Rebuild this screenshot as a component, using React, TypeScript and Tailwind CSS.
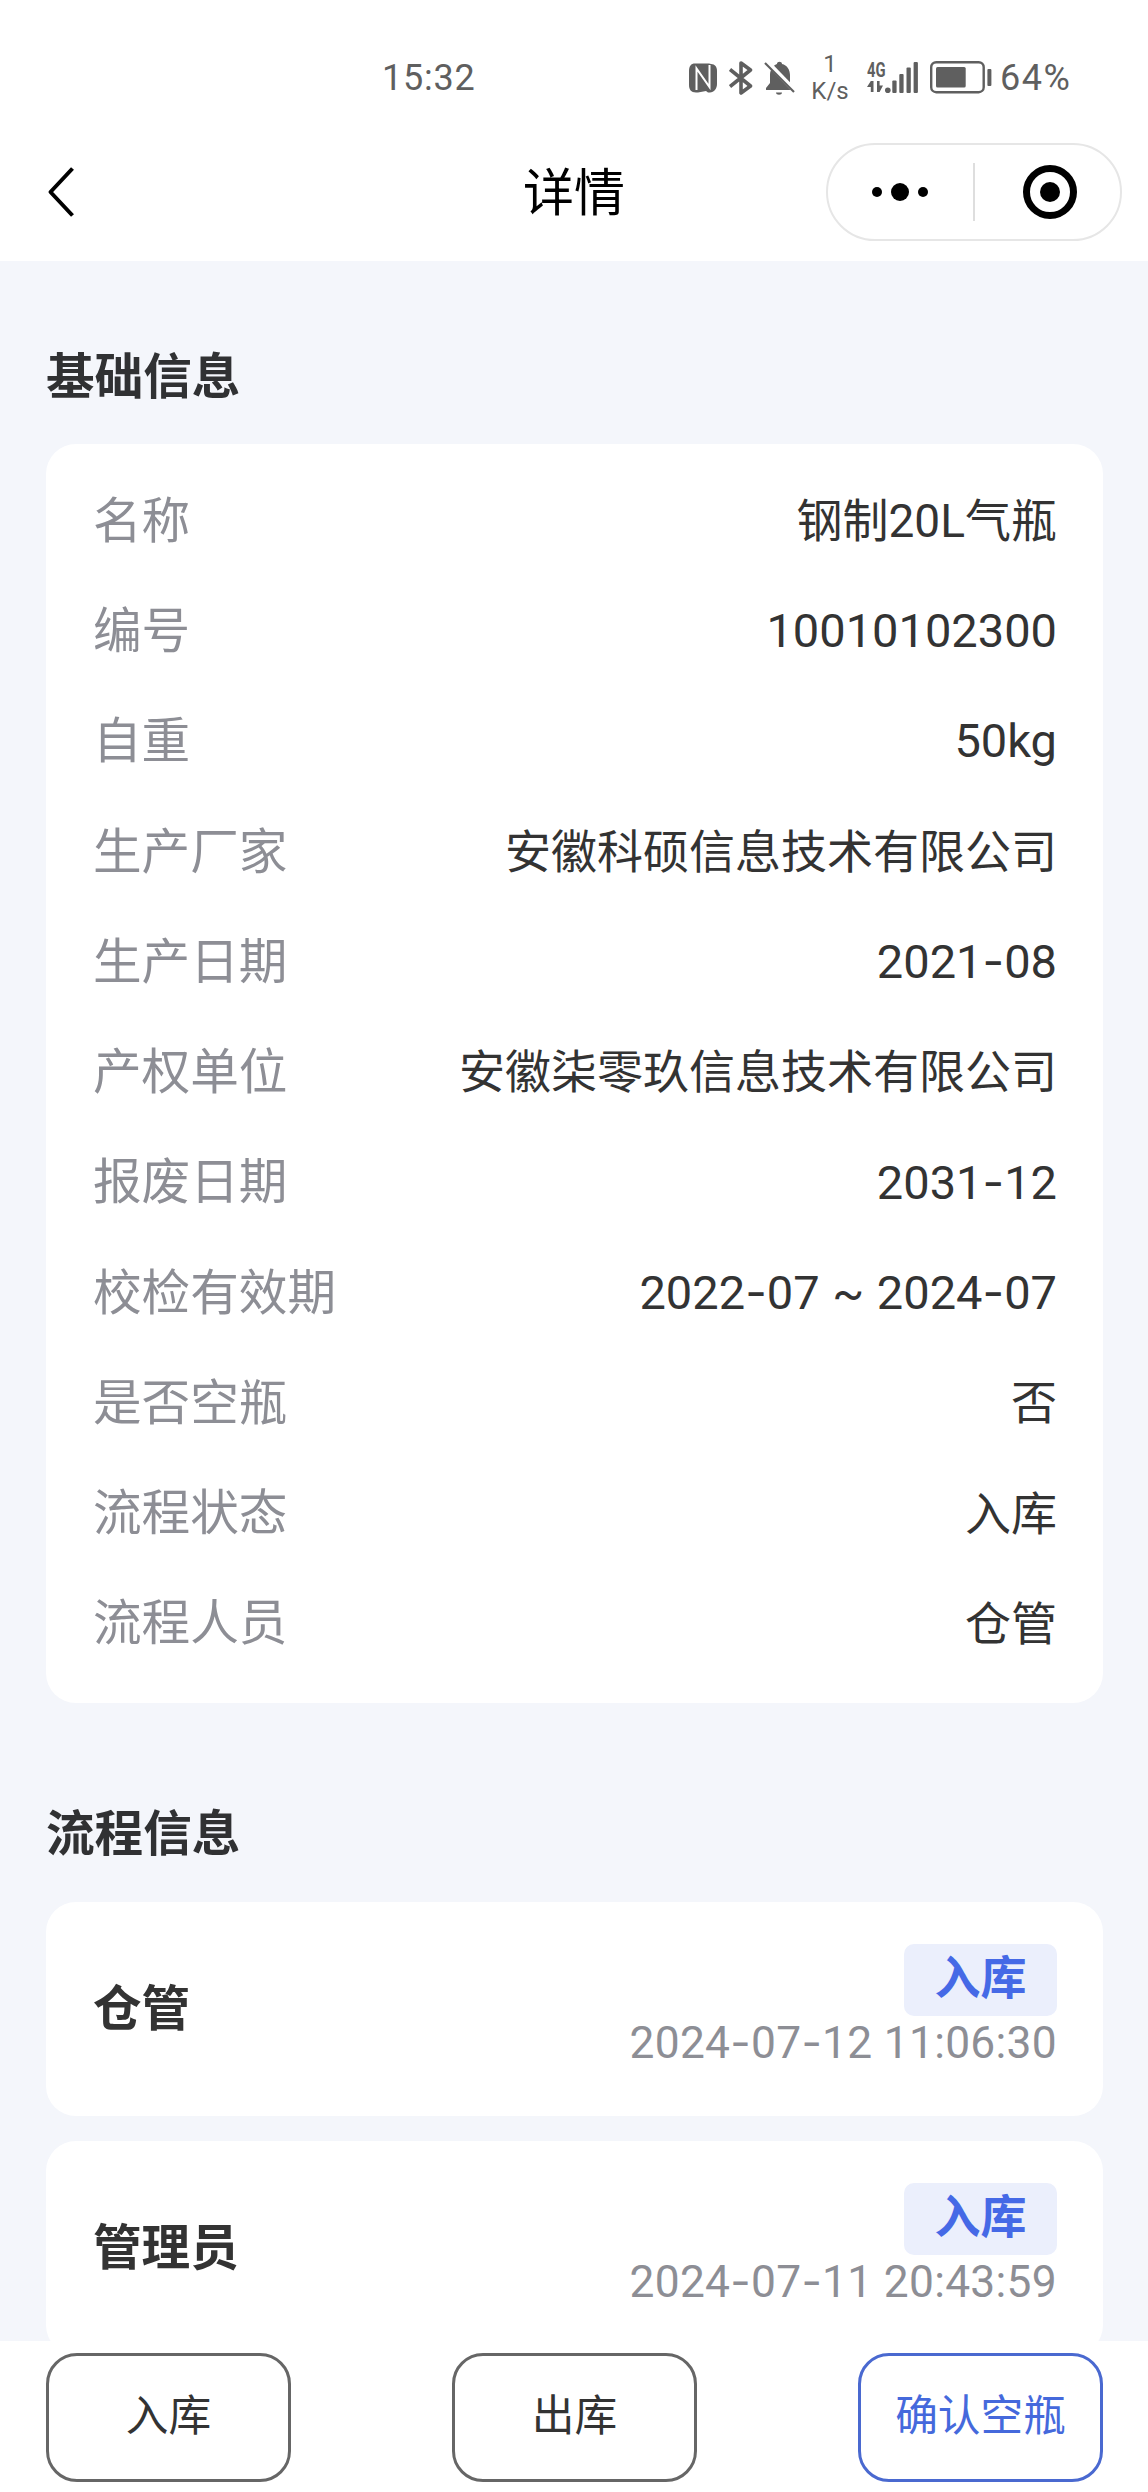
import React from "react";
import { clsx } from "clsx";

const INFO_ROWS = [
  { label: "名称", value: "钢制20L气瓶" },
  { label: "编号", value: "10010102300", numeric: true },
  { label: "自重", value: "50kg", numeric: true },
  { label: "生产厂家", value: "安徽科硕信息技术有限公司" },
  { label: "生产日期", value: "2021-08", numeric: true },
  { label: "产权单位", value: "安徽柒零玖信息技术有限公司" },
  { label: "报废日期", value: "2031-12", numeric: true },
  { label: "校检有效期", value: "2022-07 ~ 2024-07", numeric: true },
  { label: "是否空瓶", value: "否" },
  { label: "流程状态", value: "入库" },
  { label: "流程人员", value: "仓管" },
];

const FLOW_ITEMS = [
  { name: "仓管", status: "入库", time: "2024-07-12 11:06:30" },
  { name: "管理员", status: "入库", time: "2024-07-11 20:43:59" },
];

// Roboto's hyphen is short and low, so dashes are set in Inter
const Dashed = ({ text }: { text: string }) => (
  <>
    {text.split("-").map((part, i) => (
      <React.Fragment key={i}>
        {i > 0 && <span className="font-['Inter']">-</span>}
        {part}
      </React.Fragment>
    ))}
  </>
);

const StatusBar = () => (
  <div className="flex h-[130px] shrink-0 items-center pt-[26px] pl-[382px] text-[36px] leading-none text-[#5f5f5f]">
    <span className="w-[306px] tracking-[0.8px]">15:32</span>
    {/* NFC */}
    <svg width="30" height="30" viewBox="0 0 30 30" className="mr-[11px]">
      <path d="M7 .5h14L23 1c4 0 6 3 6 7v13c0 5-3 8-7 8.500h-2L18 28l-8 1.500H8c-5 0-7-3-7-7.500V8C1 3 3 .5 7 .5z" fill="#5f5f5f" />
      <path d="M8.500 27V5.500L21.500 24V2" fill="none" stroke="#fff" strokeWidth="2" />
    </svg>
    {/* Bluetooth */}
    <svg width="24" height="36" viewBox="0 0 24 36" className="mr-[11px]" fill="none" stroke="#5f5f5f" strokeWidth="3.6" strokeLinejoin="round">
      <path d="M1 9.500 21.500 26 12 33V3l9.500 7L1 26.500" />
    </svg>
    {/* Bell off */}
    <svg width="32" height="36" viewBox="0 0 32 36" className="mr-[16px]">
      <path d="M2 30v-2l4-5v-8C6 9 10 5 13 4c0-3 5-3 5 0 5 1 8 6 8 11v8l4 5v2z" fill="#5f5f5f" />
      <path d="M12 32.500h6c0 3-6 3-6 0z" fill="#5f5f5f" />
      <path d="M2 1l30 31" stroke="#fff" strokeWidth="5" />
      <path d="M1 3l29 29" stroke="#5f5f5f" strokeWidth="2.2" />
    </svg>
    <div className="mr-[19px] flex w-[36px] flex-col items-center text-[24px] leading-[27px]">
      <span>1</span>
      <span>K/s</span>
    </div>
    {/* Mobile signal */}
    <div className="mr-[12px] flex h-[36px] items-end">
      <div className="flex w-[18px] flex-col">
        <span className="h-[21px] origin-left scale-x-[0.74] text-[20px] leading-[21px] font-bold">4G</span>
        <svg width="16" height="12" viewBox="0 0 16 12" className="mb-[3px]" fill="#5f5f5f">
          <path d="M3.800 0h2.700v11H3.800V6H0z" />
          <path d="M10 0h2.600v4.500H16L12.600 11H10z" />
        </svg>
      </div>
      <svg width="33" height="36" viewBox="18 0 33 36" fill="#5f5f5f">
        <circle cx="20.800" cy="30.200" r="2.800" />
        <rect x="25.300" y="20.500" width="4.300" height="12.500" rx="1" />
        <rect x="32.300" y="14" width="4.300" height="19" rx="1" />
        <rect x="39.500" y="7.500" width="4.300" height="25.500" rx="1" />
        <rect x="46.600" y="2" width="4.300" height="31" rx="1" />
      </svg>
    </div>
    {/* Battery */}
    <svg width="62" height="34" viewBox="0 0 62 34" className="mr-[8px]" fill="#5f5f5f">
      <rect x="1.200" y="1.200" width="52.500" height="30" rx="5" fill="none" stroke="#5f5f5f" strokeWidth="2.400" />
      <rect x="6" y="6" width="29.700" height="20.500" rx="1.500" />
      <rect x="57.400" y="8" width="4" height="17" rx="1" />
    </svg>
    <span className="tracking-[1.5px]">64%</span>
  </div>
);

const NavBar = () => (
  <div className="grid h-[131px] shrink-0 grid-cols-3 items-center pr-[26px] pb-[7px] pl-[46px]">
    <svg width="30" height="50" viewBox="0 0 30 50" fill="none" stroke="#000" strokeWidth="4" strokeLinejoin="round">
      <path d="M26.500 1.500 4.500 25l22 23.500" />
    </svg>
    <h1 className="-ml-[20px] pt-[3px] text-center text-[51px] leading-none text-black">详情</h1>
    <div className="flex h-[98px] w-[296px] items-center justify-self-end rounded-full border-2 border-[#e6e6e6]">
      <div className="flex w-[145px] items-center justify-center gap-[9px]">
        <i className="size-[10px] rounded-full bg-black" />
        <i className="size-[18px] rounded-full bg-black" />
        <i className="size-[10px] rounded-full bg-black" />
      </div>
      <div className="h-[58px] w-[2px] bg-[#dedede]" />
      <div className="flex flex-1 items-center justify-center pl-[5px]">
        <div className="flex size-[54px] items-center justify-center rounded-full border-[7px] border-black">
          <i className="size-[20px] rounded-full bg-black" />
        </div>
      </div>
    </div>
  </div>
);

const SectionTitle = ({ children }: { children: React.ReactNode }) => (
  <h2 className="text-[48.6px] leading-[60px] font-bold text-[#303133]">{children}</h2>
);

export default function App() {
  return (
    <div className="flex h-[2492px] w-[1148px] flex-col overflow-hidden bg-white font-['Roboto','Noto_Sans_CJK_SC',sans-serif] text-[#333]">
      <StatusBar />
      <NavBar />

      <main className="min-h-0 flex-1 overflow-hidden bg-[#f4f6fb] pt-[87px] pr-[45px] pl-[46px]">
        <SectionTitle>基础信息</SectionTitle>
        <div className="mt-[36px] rounded-[30px] bg-white pt-[23px] pr-[46px] pb-[23px] pl-[47px]">
          {INFO_ROWS.map((row) => (
            <div key={row.label} className="flex h-[110.27px] items-center justify-between">
              <span className="text-[48.6px] leading-none text-[#8d8e95]">{row.label}</span>
              <span
                className={clsx(
                  "leading-none",
                  row.numeric ? "pb-[4px] text-[47px] [word-spacing:1px]" : "pb-[2px] text-[46px]"
                )}
              >
                <Dashed text={row.value} />
              </span>
            </div>
          ))}
        </div>

        <div className="mt-[102px]">
          <SectionTitle>流程信息</SectionTitle>
        </div>
        <div className="mt-[37px] flex flex-col gap-[25px]">
          {FLOW_ITEMS.map((item) => (
            <div key={item.time} className="flex h-[214px] items-center justify-between rounded-[30px] bg-white pr-[46px] pl-[47px]">
              <span className="pt-[3px] text-[48.6px] leading-none font-bold">{item.name}</span>
              <div className="flex flex-col items-end">
                <span className="flex h-[72px] w-[153px] items-center justify-center rounded-[10px] bg-[#ebeffc] pb-[4px] text-[46px] leading-none font-bold text-[#4569e6]">
                  {item.status}
                </span>
                <span className="-mt-[2px] mb-[2px] text-[44.3px] leading-[56px] tracking-[0.3px] text-[#8d8e95]">
                  <Dashed text={item.time} />
                </span>
              </div>
            </div>
          ))}
        </div>
      </main>

      <footer className="flex h-[151px] shrink-0 justify-between bg-white pt-[12px] pr-[45px] pl-[46px] text-[42.7px]">
        <button className="h-[129px] w-[245px] rounded-[31px] border-[3px] border-[#666] pb-[2px] leading-none">入库</button>
        <button className="h-[129px] w-[245px] rounded-[31px] border-[3px] border-[#666] pb-[2px] leading-none">出库</button>
        <button className="h-[129px] w-[245px] rounded-[31px] border-[3px] border-[#4a69d0] pb-[2px] leading-none text-[#4569dc]">确认空瓶</button>
      </footer>
    </div>
  );
}
